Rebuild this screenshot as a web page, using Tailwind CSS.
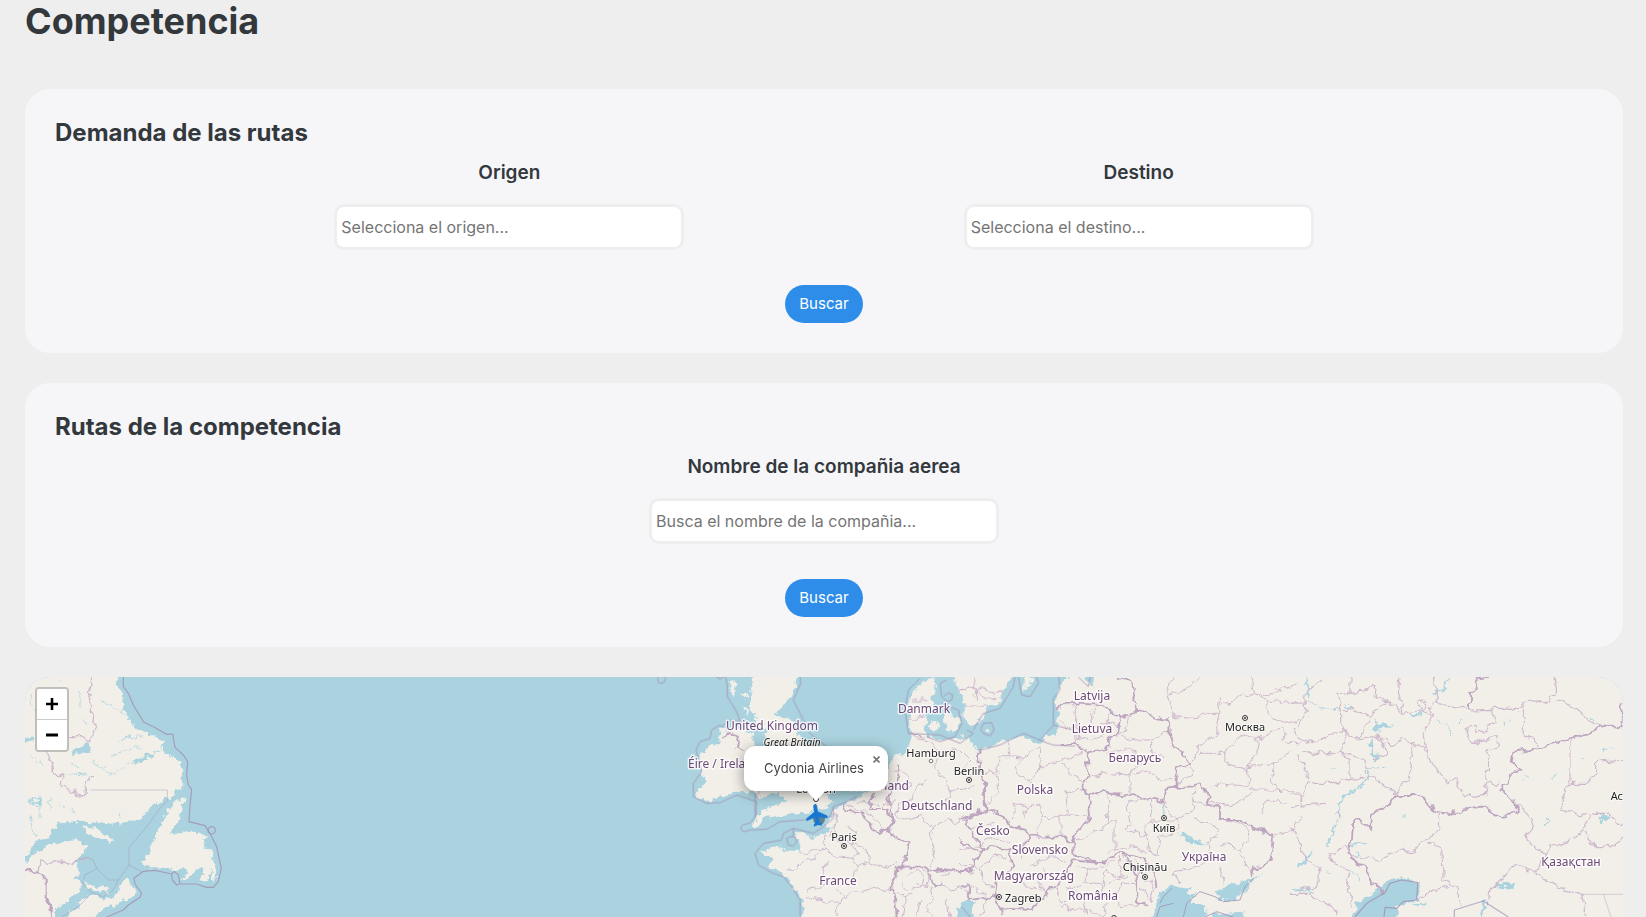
<!DOCTYPE html>
<html lang="es">
<head>
<meta charset="utf-8">
<meta name="viewport" content="width=device-width, initial-scale=1">
<title>Competencia</title>
<script src="https://cdn.jsdelivr.net/npm/@tailwindcss/browser@4"></script>
</head>
<body class="flex min-h-screen flex-col bg-[#eeeeee] pr-[23px] pl-[25px] font-[Inter,Roboto,sans-serif] text-[#33383d]">
<h1 class="mb-[47px] text-[36px] leading-[42px] font-bold">Competencia</h1>

<main class="flex grow flex-col gap-[30px]">
  <section class="rounded-[25px] bg-[#f6f6f9] p-[30px]">
    <h2 class="text-[24px] leading-[28px] font-bold">Demanda de las rutas</h2>
    <form class="mt-[15px] flex flex-col items-center">
      <div class="flex w-full flex-wrap justify-evenly">
        <div class="flex flex-col items-center gap-5">
          <label for="origen" class="text-[19px] leading-[22px] font-semibold">Origen</label>
          <input id="origen" type="text" placeholder="Selecciona el origen..." class="h-[46px] w-[350px] rounded-[10px] border-3 border-[#eeeeee] bg-white px-1 text-[16px] placeholder:text-[#757575]">
        </div>
        <div class="flex flex-col items-center gap-5">
          <label for="destino" class="text-[19px] leading-[22px] font-semibold">Destino</label>
          <input id="destino" type="text" placeholder="Selecciona el destino..." class="h-[46px] w-[350px] rounded-[10px] border-3 border-[#eeeeee] bg-white px-1 text-[16px] placeholder:text-[#757575]">
        </div>
      </div>
      <button type="button" class="mt-[35px] h-[38px] w-[78px] rounded-[20px] bg-[#2e8de9] text-[15px] text-white">Buscar</button>
    </form>
  </section>

  <section class="rounded-[25px] bg-[#f6f6f9] p-[30px]">
    <h2 class="text-[24px] leading-[28px] font-bold">Rutas de la competencia</h2>
    <form class="mt-[15px] flex flex-col items-center">
      <div class="flex flex-col items-center gap-5">
        <label for="compania" class="text-[19px] leading-[22px] font-semibold">Nombre de la compañia aerea</label>
        <input id="compania" type="text" placeholder="Busca el nombre de la compañia..." class="h-[46px] w-[350px] rounded-[10px] border-3 border-[#eeeeee] bg-white px-1 text-[16px] placeholder:text-[#757575]">
      </div>
      <button type="button" class="mt-[35px] h-[38px] w-[78px] rounded-[20px] bg-[#2e8de9] text-[15px] text-white">Buscar</button>
    </form>
  </section>

  <section class="relative min-h-60 grow overflow-hidden rounded-t-[25px] bg-[#aad3df]" aria-label="Mapa de rutas">
    <svg class="absolute inset-0 size-full" viewBox="25 677 1598 240" preserveAspectRatio="xMidYMin slice">
      <defs>
        <filter id="coast" filterUnits="userSpaceOnUse" x="0" y="650" width="1660" height="300" color-interpolation-filters="sRGB">
          <feTurbulence type="fractalNoise" baseFrequency="0.16" numOctaves="3" seed="4"/>
          <feDisplacementMap in="SourceGraphic" scale="9" xChannelSelector="R" yChannelSelector="G"/>
        </filter>
        <filter id="rough" filterUnits="userSpaceOnUse" x="0" y="650" width="1660" height="300" color-interpolation-filters="sRGB">
          <feTurbulence type="fractalNoise" baseFrequency="0.12" numOctaves="2" seed="9"/>
          <feDisplacementMap in="SourceGraphic" scale="9" xChannelSelector="R" yChannelSelector="G"/>
        </filter>
      </defs>

      <!-- land -->
      <g filter="url(#coast)" fill="#f2efe9">
        <g transform="translate(0 660) scale(.33333)">
          <path d="M40 20H345L350 75 362 100 370 130 380 165 395 190 410 205 440 220 470 230 500 240 485 260 500 280 545 305 550 380 500 420 460 435 430 470 400 487 345 492 300 487 180 485 160 510 145 535 110 545 75 590 40 610Z"/>
          <path d="M40 630 100 585 150 555 200 540 240 543 258 560 255 580 230 600 240 640 225 650 245 670 240 690 210 720 165 748 165 800H40Z"/>
          <path d="M185 800 205 762 240 740 235 725 265 705 300 715 340 715 350 700 365 665 385 652 390 670 408 700 380 715 350 730 300 755 250 785Z"/>
          <path d="M255 655 262 672 290 682 333 680 330 697 290 695 258 682Z"/>
          <path d="M250 502 290 507 325 524 345 545 325 545 285 530 255 512Z"/>
          <path d="M558 412 520 425 490 480 465 530 450 575 425 605 430 622 500 622 520 630 550 625 568 638 540 660 560 660 590 630 605 622 615 640 600 660 620 665 632 625 640 670 650 640 640 600 640 570 610 565 622 530 585 515 550 515 525 525 510 520 540 480 545 440Z"/>
        </g>
        <g transform="translate(640 670) scale(.33333)">
          <path d="M345 0H472L465 60 435 105 400 135 445 145 470 175 490 220 520 235 560 270 600 290 600 350 560 378 580 400 545 415 520 425 480 432 440 432 400 440 370 445 345 470 335 462 370 420 395 408 440 395 435 375 400 370 360 385 345 365 350 330 400 300 380 240 370 190 395 180 350 170 345 130 325 110 335 90 330 60Z"/>
          <path d="M272 30 288 35 282 75 272 65ZM300 70 325 75 318 90ZM310 110 325 120 318 140Z"/>
          <path d="M240 180 300 175 335 190 345 230 330 300 340 362 300 365 240 380 200 395 165 375 200 330 180 300 175 260 210 225 240 222 235 200Z"/>
          <path d="M490 790 485 690 455 640 430 610 385 590 395 570 365 545 400 530 450 545 480 545 478 520 465 490 495 490 515 505 560 490 575 475 560 460 585 425 610 400 650 390 690 360 740 310 760 260 800 245 812 200 810 150 805 100 820 60 850 35 885 21 890 50 870 90 880 100 855 130 860 160 850 190 880 205 905 215 960 200 990 205 1010 240 1020 245 1080 215 1150 200 1185 222 1205 220 1210 200 1250 190 1255 130 1245 100 1260 50 1280 25 1280 0H3000V800Z"/>
          <path d="M935 0 955 60 975 100 970 130 980 160 1010 165 1030 140 1040 110 1080 95 1095 60 1125 0Z"/>
          <path d="M868 150 890 150 900 170 885 185 870 170ZM910 145 935 130 960 145 955 175 930 190 915 165Z"/>
          <path d="M1155 20 1180 21 1170 50 1152 60ZM1036 170 1050 182 1040 188 1033 180Z"/>
        </g>
      </g>

      <!-- inland seas, lakes and rivers -->
      <g filter="url(#coast)" fill="#aad3df">
        <g transform="translate(0 660) scale(.33333)">
          <path d="M400 300 440 285 490 262 455 285 430 303 402 312ZM215 270 245 258 262 245 275 285 250 275 220 285Z"/>
          <path d="M75 230 100 235 98 248 75 245ZM92 410 108 405 122 420 115 438 98 436 90 425ZM97 416 95 428 106 433 114 424 107 411Z" fill-rule="evenodd"/>
          <g fill="none" stroke="#aad3df" stroke-width="2.5">
            <path d="M270 300 310 325 345 345 400 305M330 290 400 265 430 262M350 240 440 225M300 120 340 140 370 160M90 460 95 500 110 530M120 410V480M155 410 150 450M85 280 130 320M170 60 180 70M95 100 90 130 110 150M240 90V140M250 180 260 200M215 310 240 320M190 340 260 345M365 460V475M340 630 355 622M180 430 190 450M220 440 225 465"/>
          </g>
        </g>
        <g transform="translate(960 670) scale(.33333)">
          <path d="M362 0 385 45 400 50 402 0Z"/>
          <path d="M560 790 590 700 600 670 635 645 665 655 690 655 680 672 710 672 690 690 735 705 738 790ZM738 790 760 735 800 728 850 725 885 790ZM768 665 810 645 860 630 912 612 870 637 860 660 820 690 775 690Z"/>
          <path d="M-20 790 0 700 30 685 45 698 35 720 60 790Z"/>
          <path d="M655 487 690 500 745 530 715 525 680 512ZM608 400H614V440H609Z"/>
        </g>
        <g transform="translate(1290 670) scale(.33333)">
          <path d="M180 790 200 700 250 670 290 635 340 622 390 640 385 690 350 700 320 710 335 790Z"/>
          <path d="M250 185 262 165 315 160 275 180ZM235 215 250 205 245 240 265 260 255 280 245 255ZM20 595 40 570 68 540 50 585ZM610 655 640 635 680 640 670 660 640 650ZM580 690 590 685 578 741H570ZM925 440 960 435 945 458 930 455ZM785 325 800 308 795 325ZM765 465 772 443 776 445 770 467ZM365 130 395 130 398 140 370 138ZM155 100 195 118 180 118Z"/>
          <path fill="none" stroke="#aad3df" stroke-width="5" d="M50 20 58 85M255 145 265 165M265 245 250 280M240 300 220 345 160 380 150 400V440M145 445 110 530M430 70 460 60 475 30M0 660 50 655 70 670M190 520H230M195 550 215 555M370 705 410 703"/>
          <path fill="none" stroke="#aad3df" stroke-width="3" d="M60 90 100 120 150 118M230 295 285 292M110 595 125 610M185 600 210 635M440 150 470 165 490 200M510 160 525 140M640 155V165M660 150V160M685 120V130M905 145V155M940 238H950M960 235H970M880 265 875 272M120 300H135M345 435V442M700 325 710 320"/>
        </g>
      </g>

      <!-- borders -->
      <g filter="url(#rough)" fill="none" stroke="#cdb8cd" stroke-linejoin="round">
        <g transform="translate(0 660) scale(.33333)" stroke-width="4">
          <path d="M278 40 272 80 265 110 275 155 285 160 282 190 288 205 270 240 245 230 205 230M138 272 150 300 165 305 155 335 170 350 185 340 185 375 215 390 250 410 258 370 270 350 285 350M260 592 215 610 190 600 150 607 120 603 115 630 90 637"/>
          <path stroke="#bda5c0" stroke-width="6" d="M60 650 90 630 120 640 137 650 137 710 150 740 165 790"/>
        </g>
        <g transform="translate(640 670) scale(.33333)" stroke-width="3">
          <path d="M360 330 355 390M400 320 440 360M585 430 595 460 570 490 550 510 560 540M585 430 590 510 640 520 650 500 645 480 620 470M480 545 500 550 540 535 560 540 590 560 640 565 650 550 635 520M640 565 650 590 690 580 740 595 770 575M440 600 470 590 500 570 545 555M495 665 540 650 560 640 545 610 560 570M495 680 540 690 600 700 610 680 590 660 620 640 640 650 650 590M600 700 590 741M610 680 660 665 700 655 740 665 765 650M690 580 680 540 640 520M620 400 650 420 690 430 720 470 740 490M650 400 700 395 720 420 740 400 760 395M760 300 790 300 810 330 800 350 760 360 740 330M812 200 870 215 900 250 880 290 910 325 930 360 1000 350M860 330 830 350 810 390 780 400 770 440 800 450 840 440 880 470 870 510 885 560 870 590M880 470 920 450 960 460 985 440M930 360 920 400 950 420 985 410M905 250 960 240 990 270 970 290 990 320M810 150 850 140 860 130M820 90 870 90M955 60 1010 50 1060 70 1090 60M975 105 1040 105M1000 20 1010 90"/>
          <path d="M800 620 830 600 850 620 840 650 800 660 780 640M850 600 870 620 860 650 830 640M770 670 800 680 820 670M905 620 960 600 1000 610M870 650 880 690 860 720 880 741M900 640 930 660 960 650 990 670M800 680 790 741M840 690 830 741M920 690 930 741"/>
          <path stroke="#bda5c0" stroke-width="5.5" d="M250 210 270 190 300 200 290 230 310 240M610 400 620 425 660 430 690 460 715 490 740 480 760 500 810 520M700 370 690 420 740 420 760 450 740 490M775 280 770 340 745 380 760 440M810 520 800 560 790 590 770 590 765 630 750 650 765 680 770 741M790 590 850 590 870 605 900 600 950 605 1000 600M870 605 880 650 910 640M1015 240 1020 290 1035 340 1035 390 1040 415 980 440 975 460 1000 500 1030 535 1010 560 1000 590 960 610M812 195 850 200"/>
        </g>
        <g transform="translate(960 670) scale(.33333)" stroke-width="3">
          <path d="M0 60 40 50 70 80 110 90M145 220 150 260 190 265 240 225M190 265 165 290 170 310 200 330 220 345 240 370M240 225 235 310 210 340M235 310 240 290 300 270 365 250M310 280 330 310 380 340M75 310 110 305 115 260 150 260M115 310 115 365 85 400M165 400 200 410 240 400 250 440 230 470 235 510M315 365 325 430 290 440 270 450 240 440M325 430 390 440M315 365 380 360M165 400 160 450M200 410 190 450M300 430 300 500M310 110 350 110 345 170 320 180 300 150M345 170 350 220 380 240M390 120 400 170 440 160 480 170M400 110 400 150M440 160 430 200 390 210 350 200M450 130 440 160M510 130 500 180 470 200M480 200 530 210 575 210 575 240 610 260M575 210 630 180M440 250 490 240 520 240 540 280 520 300 510 315 430 310 385 325M510 315 510 375M520 310 560 300 600 330 640 320M640 20 620 70 640 140 700 145 740 130 780 130 775 80M625 75 680 60 720 20M780 105 810 100 850 75 880 70 870 20M880 70 920 90 915 110 935 150 980 160 1020 150M920 90 1020 100M915 80 960 60 1010 40M780 130 770 190 720 220 700 270 690 280M720 250 790 250 800 280 865 300M790 250 840 200 890 210 895 250 860 290 870 350 770 340 745 350M860 290 940 280 945 310 930 330 955 360 870 360M890 210 960 170 980 190 965 210 1020 220M940 280 1000 240M955 360 1020 370M690 290 700 320 650 340"/>
          <path d="M445 370 450 400 440 460 380 500 350 510M440 460 465 450V540L440 550M500 395 510 460 500 480 560 500 570 550 600 560M465 540 520 530 560 550M500 395 575 385M575 390 575 450 545 480 560 500M575 450 650 450 655 480M610 400 650 450 700 420 705 350M700 390 770 410M700 450 760 460 780 490 740 520 760 560 720 590 640 610M655 480 600 500 590 560M770 450 850 460 870 500 840 540 860 590 880 610M840 540 780 520M780 590 790 640M640 610 660 640M940 500 1000 480 1020 440M900 430 920 390 980 400M740 390 810 410 880 370M0 540 50 530 100 500 150 520M30 480 100 460M0 580 60 590 100 560 140 560M60 590 80 650 100 650M20 640 90 680 60 741M150 620 190 640 250 660M180 570 190 520 210 500M210 590 260 560 320 570M250 590 240 640 260 680M300 640 290 680 320 700M320 660 370 640 380 600 350 590M380 600 430 590 470 570M370 640 430 640 440 600 470 620 500 620M430 640 420 680 370 690 350 660M420 680 470 670 480 640 530 640M470 670 480 710 540 700M370 690 380 730M300 700 340 720 380 720 430 741M430 741 440 700M520 570 540 590 530 620M550 640 570 630 580 660M480 560 490 620 450 640M540 650 570 690 590 640"/>
          <path stroke="#bda5c0" stroke-width="5.5" d="M285 115 310 105 345 100 430 105 480 145 475 190 445 210 440 240 380 250 350 225 300 225M480 145 510 130 535 120 600 145 625 150 635 220 665 245 690 280 650 295 650 350 615 360 610 395 575 385 510 375 430 365 385 380 365 345 385 320 380 250M465 20 510 30 525 60 520 90 535 120M650 350 690 350 720 340 740 360 745 400 780 410 780 450 850 450 880 480 940 490 930 570 880 600 875 625M385 380 390 440 350 490 340 520 300 500 210 500 200 480 150 470 130 440 85 420 60 430 0 450M75 410 70 340M340 520 340 550 420 580 460 560 490 550 540 560 580 600 590 650M340 570 300 640 260 660 240 690 210 720 120 715 100 680 30 690 30 650 0 645M340 570 420 580M0 510 60 550 90 530 150 540 160 590 110 620 100 680M490 550 520 590 530 640 535 700 560 710M120 715 130 741M210 500 180 540 150 540"/>
        </g>
        <g transform="translate(1290 670) scale(.33333)" stroke-width="3.5">
          <path d="M0 100 45 95 50 60 100 30M45 95 50 140 10 180 35 210 80 220 110 195 160 185 170 210 150 245 100 250 60 245 30 250M180 20 180 70 145 75 150 120 190 115 240 140 290 90 255 80 260 45 235 60 180 70M155 125 155 180 200 210 230 160 240 140M200 210 270 200 300 225 340 210 410 240 400 180 430 140 410 130 380 100 400 90 410 120 340 130 290 90M330 20 325 70 340 130M430 20 440 100 415 110 430 140M440 100 530 115M535 120 605 118 610 150 585 185 560 190 565 170 535 170 530 200 560 220 600 205 625 200 620 230 595 240 590 335 630 340M410 240 420 270 470 335 500 330 520 380 585 370 590 335M370 230 360 320 320 370M20 260 55 310 50 340 120 340 180 325 240 320 320 370M50 340 30 380 40 405 0 410M180 325 180 270 150 245M150 245 220 270 230 310M270 200 290 250 250 270M110 400 40 405M0 375 40 375M605 115 690 115 710 95 780 90 800 70 795 20M700 115 700 200 740 210 740 235M800 90 860 120 900 150 930 165M840 210 840 340 890 340 920 310 920 275 960 270 1020 285M840 340 815 380 820 420 900 440 880 475 850 510 780 530 770 560M900 430 960 430 980 460 1020 460M880 475 910 530 970 530 1000 500M685 400 720 440 730 470 710 490 720 525 770 550 735 610M445 430 440 490 415 500 390 520 370 545 330 540 270 570 190 560M415 510 455 535 460 630 500 650 515 710M385 690 430 660 480 650M595 700 600 660 650 610 680 580 735 610 770 630 830 665 875 673 880 700 890 741M0 470 20 500 40 560 90 600 80 650 30 660M130 430 150 440M190 560 160 530 120 550 130 580 180 600 170 660 190 680 185 710M0 670 50 670 140 720 140 741"/>
          <path stroke="#bda5c0" stroke-width="5.5" d="M595 20 560 30 560 60 540 70V118M995 100V175L930 165 910 185 835 208 740 235 670 245 665 280 700 300 660 310 660 340 630 360 680 395 680 430 620 440 580 410 520 415 480 435 440 425 410 390 370 375 315 375 290 410 245 435 240 475 210 450 190 455 185 510 175 550 200 585 230 590 250 640 285 668"/>
        </g>
      </g>

      <!-- straight and maritime boundaries -->
      <g fill="none" stroke="#a18fb3" stroke-opacity=".8" stroke-linejoin="round">
        <g transform="translate(0 660) scale(.33333)" stroke-width="3.5">
          <path d="M370 40 370 80 385 100 400 135 432 187 460 200 500 223 518 222 525 262 550 285 563 305 560 345 565 375 575 388 570 435 567 485 615 497 630 520 650 560 664 625 655 665 640 682 620 682 590 672 540 672 535 645 523 634 515 642 517 660 530 675 542 670M515 642 465 631 430 634 402 655 405 672 425 700 420 712 385 735 370 750 320 771"/>
          <circle cx="635" cy="511" r="11"/>
          <path stroke-width="2.5" stroke-opacity=".5" d="M272 390H502V422L480 445 440 500 387 563V615L425 635M387 615 355 660 325 660 290 625 280 600 260 592 235 600 215 610M290 625 255 645 248 670 270 695 310 710 340 690 355 660M275 700 235 740 185 771"/>
        </g>
        <g transform="translate(640 670) scale(.33333)" stroke-width="3">
          <circle cx="64" cy="28" r="12"/>
          <path d="M255 10 262 50 262 80 290 125 300 155 270 150 245 170 240 165 215 180 210 205 180 215 168 240 180 285 185 305 160 340 160 380 200 400 240 398 290 375 350 395 348 435 330 460 M480 10 482 40 460 90 480 130 510 190 560 230M228 20 240 27 252 20"/>
          <path d="M330 460Q302 462 302 475 308 492 328 480L380 478 420 455 490 450 525 440 570 440 580 410 620 395 650 380M345 440V370M580 410 580 445 550 470 520 490 460 475 430 490 425 510 370 520 345 550 355 585 400 610 430 620 455 650 480 690 480 741M460 475V500M440 505 445 525 460 528 470 515 465 500 450 500Z"/>
          <path d="M805 190 795 120 805 60 840 25M900 40 905 80 920 95 935 90 938 75 925 68 912 78M905 100 955 120 965 160 945 200 900 215 860 200M805 190 900 195 960 220 1000 190 980 180M900 40 920 30"/>
          <path d="M1000 180 1030 130 1080 115 1120 50 1125 21M1255 10 1260 60 1240 85 1240 165 1200 210 1150 190 1080 225 1020 240M1240 165 1300 180M1195 210 1240 225 1305 228M1135 20 1145 75 1170 80 1195 40 1190 20"/>
          <path d="M1030 160 1055 158 1062 180 1050 198 1030 190 1022 178ZM1315 21 1345 50 1350 21"/>
        </g>
        <g transform="translate(960 670) scale(.33333)" stroke-width="3">
          <path d="M600 700 610 680 635 655M590 741 600 710 640 700M670 741 680 700 720 665 765 680 790 695 840 690 855 650 880 625M735 741 770 725 820 741M5 710 30 741"/>
        </g>
        <g transform="translate(1290 670) scale(.33333)" stroke-width="3.5">
          <path d="M195 741 230 700 285 668 300 640 335 630 383 638 380 690 340 695 320 715 285 712 282 741"/>
          <path stroke-opacity=".7" d="M493 741V720L580 693 655 741"/>
          <path stroke-opacity=".45" stroke-width="2.5" d="M875 673H1000M940 673 963 741"/>
        </g>
      </g>

      <!-- place names -->
      <g class="font-['Noto_Sans',sans-serif] text-[12px]" fill="#6e4a78" stroke="#ffffff" stroke-opacity=".75" stroke-width="3" stroke-linejoin="round" paint-order="stroke" text-anchor="middle">
        <text x="772" y="730">United Kingdom</text>
        <text x="688" y="768" text-anchor="start">Éire / Ireland</text>
        <text x="924" y="713">Danmark</text>
        <text x="909" y="790" text-anchor="end">Nederland</text>
        <text x="937" y="810">Deutschland</text>
        <text x="838" y="885">France</text>
        <text x="1092" y="700">Latvija</text>
        <text x="1092" y="733">Lietuva</text>
        <text x="1135" y="762">Беларусь</text>
        <text x="1035" y="794">Polska</text>
        <text x="993" y="835">Česko</text>
        <text x="1040" y="854">Slovensko</text>
        <text x="1034" y="880">Magyarország</text>
        <text x="1093" y="900">România</text>
        <text x="1204" y="861">Україна</text>
        <text x="1571" y="866">Қазақстан</text>
      </g>
      <g class="font-['Noto_Sans',sans-serif] text-[11px]" fill="#222222" stroke="#ffffff" stroke-opacity=".7" stroke-width="2" stroke-linejoin="round" paint-order="stroke" text-anchor="middle">
        <text x="792" y="746" class="text-[10px] italic">Great Britain</text>
        <text x="816" y="793">London</text>
        <text x="931" y="757">Hamburg</text>
        <text x="969" y="775">Berlin</text>
        <text x="844" y="841">Paris</text>
        <text x="1245" y="731">Москва</text>
        <text x="1164" y="832">Київ</text>
        <text x="1145" y="871">Chișinău</text>
        <text x="1005" y="902" text-anchor="start">Zagreb</text>
        <text x="1623" y="800" text-anchor="end">Ас</text>
      </g>
      <g fill="#ffffff" fill-opacity=".6" stroke="#333333">
        <circle cx="816" cy="799" r="2.5"/><circle cx="931" cy="761" r="1.8" stroke="#777777"/>
        <circle cx="969" cy="780" r="2.5"/><circle cx="844" cy="846" r="2.5"/><circle cx="1245" cy="718" r="2.5"/>
        <circle cx="1164" cy="818" r="2.5"/><circle cx="1145" cy="877" r="2.5"/><circle cx="999" cy="897" r="2.5"/><circle cx="1114" cy="918" r="2.5"/>
      </g>
      <g fill="#333333">
        <circle cx="969" cy="780" r="1"/><circle cx="844" cy="846" r="1"/><circle cx="1245" cy="718" r="1"/>
        <circle cx="1164" cy="818" r="1"/><circle cx="1145" cy="877" r="1"/><circle cx="999" cy="897" r="1"/>
      </g>

      <!-- plane marker -->
      <circle cx="819" cy="819" r="6" fill="#4c7585" fill-opacity=".85"/>
      <path transform="translate(817 815) rotate(-8) scale(1.08) translate(-12 -12)" fill="#1976d2" stroke="#1976d2" stroke-width=".6" d="M21 16v-2l-8-5V3.500c0-.83-.67-1.500-1.500-1.500S10 2.670 10 3.500V9l-8 5v2l8-2.500V19l-2 1.500V22l3.500-1 3.500 1v-1.500L13 19v-5.500l8 2.500z"/>
    </svg>

    <div class="absolute top-[10px] left-[10px] flex flex-col rounded-[4px] border-2 border-black/20 bg-clip-padding">
      <button type="button" aria-label="Acercar" class="flex h-[31px] w-[30px] items-center justify-center rounded-t-[2px] border-b border-[#cccccc] bg-white">
        <svg class="size-3" viewBox="0 0 12 12" stroke="#000000" stroke-width="2.6"><path d="M0 6H12M6 0V12"/></svg>
      </button>
      <button type="button" aria-label="Alejar" class="flex h-[30px] w-[30px] items-center justify-center rounded-b-[2px] bg-white">
        <svg class="size-3" viewBox="0 0 12 12" stroke="#000000" stroke-width="3"><path d="M0 6H12"/></svg>
      </button>
    </div>

    <div class="absolute top-[69px] left-[calc(50%-80px)] h-[45px] w-[144px] rounded-[12px] bg-white shadow-[0_3px_14px_rgba(0,0,0,0.4)]" role="dialog" aria-label="Cydonia Airlines">
      <svg class="absolute top-[44px] left-[62px] h-[11px] w-5" viewBox="0 0 20 11" fill="#ffffff"><path d="M0 0H20L10 11Z"/></svg>
      <p class="pr-1 text-center text-[13px] leading-[44px] text-[#444444]">Cydonia Airlines</p>
      <button type="button" aria-label="Cerrar" class="absolute top-0 right-0 flex size-6 items-center justify-center pt-[2px]">
        <svg class="size-[7px]" viewBox="0 0 7 7" stroke="#757575" stroke-width="1.600"><path d="M.5.5 6.500 6.500M6.500.5.5 6.500"/></svg>
      </button>
    </div>
  </section>
</main>
</body>
</html>
